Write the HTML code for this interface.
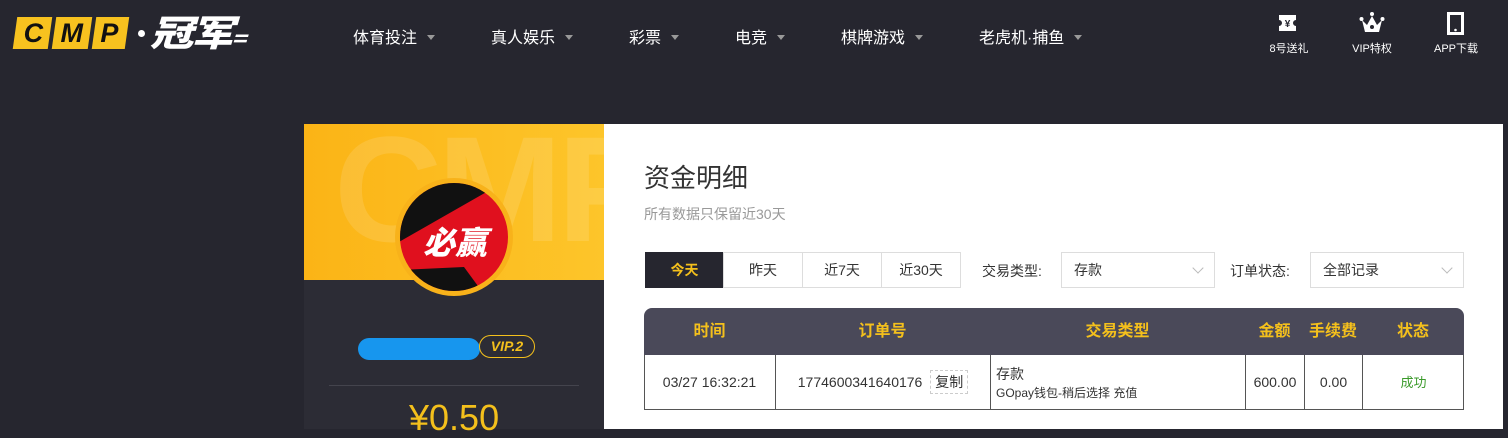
<!DOCTYPE html>
<html><head><meta charset="utf-8"><style>
*{margin:0;padding:0;box-sizing:border-box}
body{width:1508px;height:429px;overflow:hidden;background:#26262f;font-family:"Liberation Sans","Noto Sans CJK SC",sans-serif;position:relative}
.a{position:absolute}
.nav{color:#fff;font-size:16px;top:24px}
.nav i{display:inline-block;width:0;height:0;border-left:4px solid transparent;border-right:4px solid transparent;border-top:5px solid #999;margin-left:10px;vertical-align:3px}
.ic{color:#fff;font-size:11px;top:40px;text-align:center}
.tab{top:252px;height:36px;border:1px solid #ddd;font-size:14px;text-align:center;line-height:34px;color:#333}
.sel{top:252px;height:36px;border:1px solid #ddd;font-size:14px;line-height:34px;padding-left:12px;color:#333}
.sel:after{content:"";position:absolute;right:12px;top:11px;width:7px;height:7px;border-right:1px solid #bbb;border-bottom:1px solid #bbb;transform:rotate(45deg)}
.th{top:308px;height:47px;line-height:47px;color:#f4c01c;font-weight:bold;font-size:16px;text-align:center}
.td{top:355px;height:55px;border-left:1px solid #555;font-size:14px;color:#333;text-align:center;line-height:55px}
</style></head><body>
<!-- logo -->
<div class="a" style="left:15px;top:17px;width:114px;height:32px;">
<div class="a" style="left:0;top:0;width:35px;height:32px;background:#f7c21f;transform:skewX(-8deg)"></div>
<div class="a" style="left:39px;top:0;width:36px;height:32px;background:#f7c21f;transform:skewX(-8deg)"></div>
<div class="a" style="left:79px;top:0;width:33px;height:32px;background:#f7c21f;transform:skewX(-8deg)"></div>
<div class="a" style="left:0;top:0;width:112px;font:italic 900 27px/32px 'Liberation Sans';color:#111;display:flex;justify-content:space-around">
<span>C</span><span>M</span><span>P</span></div></div>
<div class="a" style="left:138px;top:30px;width:7px;height:7px;border-radius:50%;background:#fff"></div>
<div class="a" style="left:150px;top:9px;color:#fff;font:italic 900 36px/44px 'Noto Sans CJK SC',sans-serif;letter-spacing:-2px;transform:scaleX(1.2);transform-origin:left">冠军<span style="font-size:20px">=</span></div>
<div class="a nav" style="left:353px">体育投注<i></i></div>
<div class="a nav" style="left:491px">真人娱乐<i></i></div>
<div class="a nav" style="left:629px">彩票<i></i></div>
<div class="a nav" style="left:735px">电竞<i></i></div>
<div class="a nav" style="left:841px">棋牌游戏<i></i></div>
<div class="a nav" style="left:979px">老虎机·捕鱼<i></i></div>
<!-- icons -->
<svg class="a" style="left:1278px;top:14px" width="19" height="18"><path d="M1 1h17v5a3 3 0 0 0 0 6v5H1v-5a3 3 0 0 0 0-6z" fill="#fff"/><text x="9.5" y="13" font-size="10" text-anchor="middle" fill="#26262f" font-weight="bold">¥</text></svg>
<div class="a ic" style="left:1260px;width:58px">8号送礼</div>
<svg class="a" style="left:1359px;top:11px" width="26" height="24"><circle cx="13" cy="3" r="2" fill="#fff"/><circle cx="2.5" cy="8" r="2" fill="#fff"/><circle cx="23.5" cy="8" r="2" fill="#fff"/><path d="M3 9l5 5 5-9 5 9 5-5-3 12H6z" fill="#fff"/><circle cx="13" cy="16" r="2" fill="#26262f"/></svg>
<div class="a ic" style="left:1343px;width:58px">VIP特权</div>
<svg class="a" style="left:1447px;top:12px" width="20" height="24"><rect x="1.5" y="1.5" width="14" height="20" fill="none" stroke="#fff" stroke-width="3"/><circle cx="8.5" cy="18" r="1.3" fill="#fff"/></svg>
<div class="a ic" style="left:1427px;width:58px">APP下载</div>
<!-- left panel -->
<div class="a" style="left:304px;top:124px;width:300px;height:305px;background:#2c2c35"></div>
<div class="a" style="left:304px;top:124px;width:300px;height:156px;background:linear-gradient(90deg,#fbb416,#fdc52a);overflow:hidden">
<div class="a" style="left:30px;top:-10px;font:bold 150px/150px 'Liberation Sans';color:rgba(255,255,255,.12);letter-spacing:-5px">CMP</div></div>
<div class="a" style="left:395px;top:178px;width:118px;height:118px;border-radius:50%;background:#f8b21a"></div>
<svg class="a" style="left:399px;top:182px" width="110" height="110"><defs><clipPath id="c"><circle cx="55" cy="55" r="54"/></clipPath></defs><g clip-path="url(#c)"><rect width="110" height="110" fill="#e0101e"/><path d="M0 0h105L0 60z" fill="#111"/><path d="M0 88l65-3 22 30H0z" fill="#111"/></g><text x="56" y="72" font-size="32" font-weight="900" font-style="italic" fill="#fff" text-anchor="middle" font-family="Noto Sans CJK SC">必赢</text></svg>
<div class="a" style="left:358px;top:338px;width:122px;height:22px;border-radius:11px;background:#1796ee"></div>
<div class="a" style="left:479px;top:335px;width:56px;height:23px;border:1px solid #f4c01c;border-radius:12px;color:#f4c01c;font:italic bold 14px/21px 'Liberation Sans';text-align:center">VIP.2</div>
<div class="a" style="left:329px;top:385px;width:250px;height:1px;background:#44444d"></div>
<div class="a" style="left:409px;top:398px;color:#f4c01c;font-size:36px;line-height:40px">¥0.50</div>
<!-- right panel -->
<div class="a" style="left:604px;top:124px;width:899px;height:305px;background:#fff"></div>
<div class="a" style="left:644px;top:158px;font-size:26px;color:#333">资金明细</div>
<div class="a" style="left:644px;top:204px;font-size:14px;color:#999">所有数据只保留近30天</div>
<div class="a tab" style="left:645px;width:79px;background:#26262f;border-color:#26262f;color:#f4c01c;font-weight:bold">今天</div>
<div class="a tab" style="left:723px;width:80px">昨天</div>
<div class="a tab" style="left:802px;width:80px">近7天</div>
<div class="a tab" style="left:881px;width:80px">近30天</div>
<div class="a" style="left:982px;top:261px;font-size:14px;color:#333">交易类型:</div>
<div class="a sel" style="left:1061px;width:154px">存款</div>
<div class="a" style="left:1230px;top:261px;font-size:14px;color:#333">订单状态:</div>
<div class="a sel" style="left:1310px;width:154px">全部记录</div>
<div class="a" style="left:644px;top:308px;width:820px;height:47px;background:#4a4959;border-radius:8px 8px 0 0"></div>
<div class="a" style="left:644px;top:355px;width:820px;height:55px;border:1px solid #555;border-top:none"></div>
<div class="a th" style="left:644px;width:131px">时间</div>
<div class="a th" style="left:775px;width:215px">订单号</div>
<div class="a th" style="left:990px;width:255px">交易类型</div>
<div class="a th" style="left:1245px;width:59px">金额</div>
<div class="a th" style="left:1304px;width:58px">手续费</div>
<div class="a th" style="left:1362px;width:102px">状态</div>
<div class="a td" style="left:644px;width:131px;border-left:none">03/27 16:32:21</div>
<div class="a td" style="left:775px;width:215px">1774600341640176 <span style="display:inline-block;border:1px dashed #ccc;line-height:22px;padding:0 4px;margin-left:4px">复制</span></div>
<div class="a td" style="left:990px;width:255px;text-align:left;padding-left:5px;line-height:18px;padding-top:10px">存款<br><span style="font-size:12px">GOpay钱包-稍后选择 充值</span></div>
<div class="a td" style="left:1245px;width:59px">600.00</div>
<div class="a td" style="left:1304px;width:58px">0.00</div>
<div class="a td" style="left:1362px;width:102px;color:#3a9a2a;font-size:13px">成功</div>
</body></html>
